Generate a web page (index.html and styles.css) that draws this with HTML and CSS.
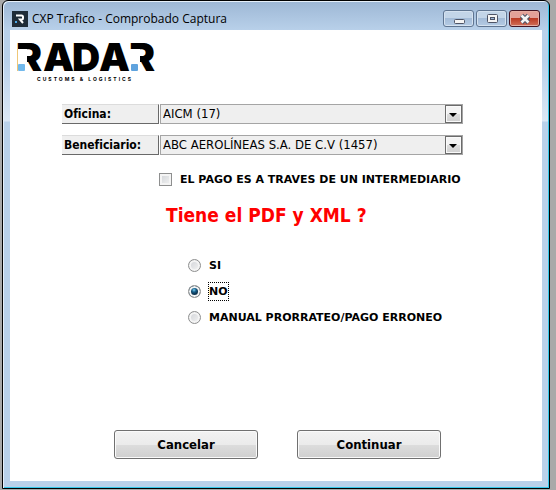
FILE: index.html
```html
<!DOCTYPE html>
<html lang="es">
<head>
    <meta charset="UTF-8">
    <meta name="viewport" content="width=device-width, initial-scale=1.0">
    <title>CXP Trafico - Comprobado Captura</title>
    <link rel="stylesheet" href="styles.css">
</head>
<body>
    <div class="window">
        <div class="title-bar">
            <svg class="app-icon" width="16" height="16" viewBox="0 0 16 16" aria-hidden="true">
                <rect width="16" height="16" fill="#1f2c38"/>
                <path d="M4 4.5H9.5Q11 4.5 11 6V7Q11 8.5 9.5 8.5H8L11 12" fill="none" stroke="#fff" stroke-width="2"/>
                <rect x="3" y="10" width="2" height="2" fill="#4aa8e8"/>
            </svg>
            <span class="title">CXP Trafico - Comprobado Captura</span>
            <div class="window-controls">
                <button type="button" class="control" aria-label="Minimizar">
                    <svg width="12" height="12" viewBox="0 0 12 12">
                        <rect x="1.5" y="6.5" width="10" height="4" rx="1" fill="#f4f4f4" stroke="#4e5466"/>
                    </svg>
                </button>
                <button type="button" class="control" aria-label="Maximizar">
                    <svg width="12" height="12" viewBox="0 0 12 12">
                        <rect x="1.5" y="1.5" width="10" height="8" rx="1" fill="#f4f4f4" stroke="#4e5466"/>
                        <rect x="4.5" y="4.5" width="4" height="2" fill="#9db7d8" stroke="#4e5466"/>
                    </svg>
                </button>
                <button type="button" class="control control-close" aria-label="Cerrar">
                    <svg width="12" height="12" viewBox="0 0 12 12">
                        <path d="M2.5 2.5L9.5 9.5M9.5 2.5L2.5 9.5" stroke="#4e5466" stroke-width="4.6"/>
                        <path d="M2.5 2.5L9.5 9.5M9.5 2.5L2.5 9.5" stroke="#f4f4f4" stroke-width="2.6"/>
                    </svg>
                </button>
            </div>
        </div>

        <div class="content">
            <svg class="logo" width="142" height="44" viewBox="0 0 142 44" role="img" aria-label="RADAR Customs &amp; Logistics">
                <text class="logo-name" x="-2 25 54 81 111" y="29">RADAR</text>
                <!-- the R has no lower stem, a blue square takes its place -->
                <path d="M0 7H9V30H0Z" fill="#fff"/>
                <path d="M112 7H122V30H112Z" fill="#fff"/>
                <rect x="0" y="22" width="7" height="7" rx="1" fill="#72b9ec"/>
                <rect x="113" y="22" width="7" height="7" rx="1" fill="#5fa3de"/>
                <text class="logo-tag" x="19" y="39">CUSTOMS &amp; LOGISTICS</text>
            </svg>

            <form class="capture-form">
                <div class="field">
                    <label for="oficina">Oficina:</label>
                    <div class="select-box">
                        <select id="oficina" name="oficina">
                            <option>AICM (17)</option>
                        </select>
                    </div>
                </div>
                <div class="field">
                    <label for="beneficiario">Beneficiario:</label>
                    <div class="select-box">
                        <select id="beneficiario" name="beneficiario">
                            <option>ABC AEROLÍNEAS S.A. DE C.V (1457)</option>
                        </select>
                    </div>
                </div>

                <div class="check-row">
                    <input type="checkbox" id="intermediario" name="intermediario">
                    <label for="intermediario">EL PAGO ES A TRAVES DE UN INTERMEDIARIO</label>
                </div>

                <h1 class="question">Tiene el PDF y XML ?</h1>

                <div class="options">
                    <div class="option">
                        <input type="radio" id="opSi" name="archivos" value="si">
                        <label for="opSi">SI</label>
                    </div>
                    <div class="option">
                        <input type="radio" id="opNo" name="archivos" value="no" checked>
                        <label for="opNo">NO</label>
                    </div>
                    <div class="option">
                        <input type="radio" id="opManual" name="archivos" value="manual">
                        <label for="opManual">MANUAL PRORRATEO/PAGO ERRONEO</label>
                    </div>
                </div>

                <div class="actions">
                    <button type="button" class="btn">Cancelar</button>
                    <button type="submit" class="btn">Continuar</button>
                </div>
            </form>
        </div>
    </div>
</body>
</html>
```

FILE: styles.css
```css
* {
    margin: 0;
    padding: 0;
    box-sizing: border-box;
}

body {
    background: #a9a9a9;
    color: #000;
    min-height: 100vh;
    padding: 0 6px 1px 2px;
    display: flex;
    font-family: "DejaVu Sans Condensed", Tahoma, sans-serif;
    font-size: 12px;
}

/* Window frame */
.window {
    flex: 1;
    display: flex;
    flex-direction: column;
    background: linear-gradient(#9db7d5, #b9d1ea 30px, #b9d1ea 60px, #dbe7f5 120px, #b9d1ea 121px);
    border: 1px solid #000;
    border-radius: 6px 6px 0 0;
    box-shadow: inset 1px 1px 0 #e6f0fa, inset -1px -1px 0 #35c8ea;
    padding: 0 7px 7px;
}

.title-bar {
    display: flex;
    align-items: center;
    height: 29px;
    padding: 6px 2px 0;
}

.title {
    flex: 1;
    margin-left: 4px;
    font-family: "Open Sans", "Segoe UI", sans-serif;
    font-size: 12px;
    line-height: 16px;
}

.window-controls {
    display: flex;
    gap: 2px;
    height: 21px;
}

.control {
    width: 31px;
    height: 17px;
    margin-top: 2px;
    display: flex;
    align-items: center;
    justify-content: center;
    background: linear-gradient(#c3d5e8 50%, #a4bcd8 50%, #b4cbe4);
    border: 1px solid #5f7591;
    border-radius: 3px;
    box-shadow: inset 0 0 0 1px #d5e2f0;
}

.control-close {
    background: linear-gradient(#e3a198 50%, #bb3b24 50%, #d0705a);
    border-color: #431422;
    box-shadow: inset 0 0 0 1px #e5aea3;
}

.content {
    flex: 1;
    background: #fff;
    padding: 12px 8px 22px;
}

/* Logo */
.logo {
    display: block;
    overflow: visible;
}

.logo-name {
    font-family: "Inter", sans-serif;
    font-size: 39px;
    font-weight: 900;
}

.logo-tag {
    font-family: "Inter", sans-serif;
    font-size: 5px;
    font-weight: 700;
    letter-spacing: 2px;
}

/* Form */
.capture-form {
    padding: 18px 71px 0 44px;
}

.field {
    display: flex;
    gap: 1px;
    height: 20px;
    margin-bottom: 11px;
}

.field label {
    width: 97px;
    padding-left: 2px;
    background: #efefef;
    border-top: 1px solid #dcdcdc;
    border-right: 1px solid #696969;
    border-bottom: 1px solid #696969;
    font-size: 12px;
    font-weight: bold;
    line-height: 18px;
}

.select-box {
    position: relative;
    flex: 1;
}

.select-box select {
    appearance: none;
    display: block;
    width: 100%;
    height: 20px;
    padding: 0 20px 1px 2px;
    background: #efefef;
    border: 1px solid #a5a5a5;
    border-radius: 0;
    color: #000;
    font-family: inherit;
    font-size: 13px;
}

.select-box::before {
    content: "";
    position: absolute;
    top: 1px;
    right: 1px;
    width: 17px;
    height: 18px;
    background: linear-gradient(#f3f3f3 50%, #dedede 50%, #d0d0d0);
    border: 1px solid #6b6b6b;
    box-shadow: inset 0 0 0 1px #fafafa;
    box-sizing: border-box;
    pointer-events: none;
}

.select-box::after {
    content: "";
    position: absolute;
    top: 9px;
    right: 6px;
    border: 4px solid transparent;
    border-top-color: #000;
    border-bottom: 0;
    pointer-events: none;
}

.check-row,
.option {
    display: flex;
    align-items: center;
    gap: 7px;
    font-family: "DejaVu Sans", Verdana, sans-serif;
    font-size: 11px;
    font-weight: bold;
}

.check-row {
    padding: 4px 0 0 97px;
}

.check-row label,
.option label {
    border: 1px solid transparent;
    line-height: 17px;
    white-space: nowrap;
}

input[type="checkbox"],
input[type="radio"] {
    appearance: none;
    width: 13px;
    height: 13px;
    border: 1px solid #8e8f8f;
    background: linear-gradient(135deg, #cfd2d6, #f4f4f4);
    box-shadow: inset 0 0 0 2px #f4f4f4;
}

input[type="radio"] {
    border-radius: 50%;
}

input[type="radio"]:checked {
    background: radial-gradient(circle at 5px 4px, #7fd0f0 0, #17608c 2px, #0c3450 4px);
}

.option input:checked + label {
    border: 1px dotted #000;
}

.question {
    padding: 14px 0 0 104px;
    color: #f00;
    font-size: 19px;
    line-height: 24px;
}

.options {
    display: grid;
    gap: 7px;
    padding: 29px 0 0 126px;
}

.actions {
    display: flex;
    gap: 39px;
    padding: 103px 0 0 52px;
}

.btn {
    width: 144px;
    height: 29px;
    background: linear-gradient(#f2f2f2, #ebebeb 50%, #dddddd 50%, #cfcfcf);
    border: 1px solid #707070;
    border-radius: 3px;
    box-shadow: inset 0 0 0 1px #fafafa;
    color: #000;
    font-family: inherit;
    font-size: 13px;
    font-weight: bold;
}
```
